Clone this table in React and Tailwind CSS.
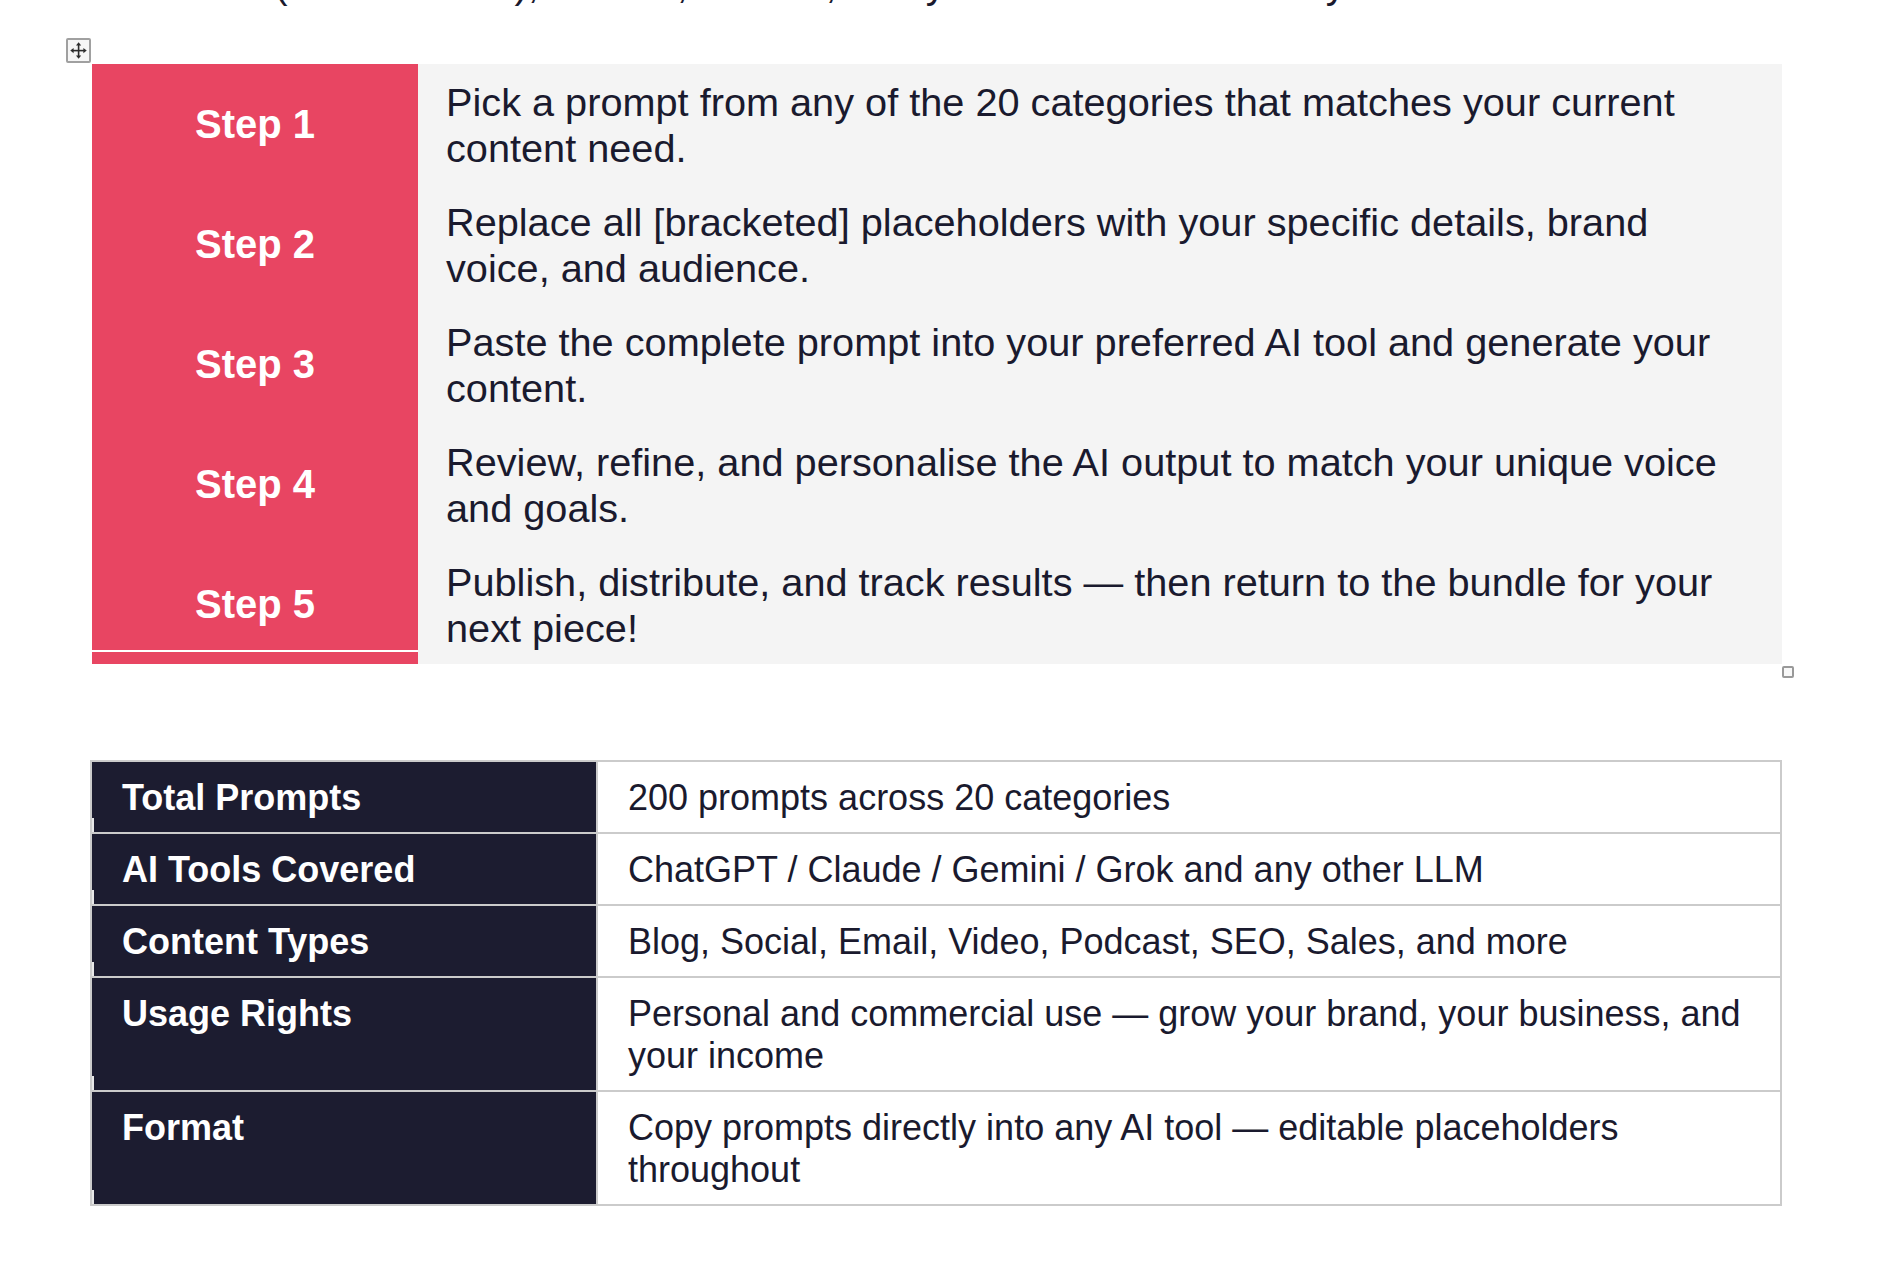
import React from "react";

const steps = [
  { label: "Step 1", text: "Pick a prompt from any of the 20 categories that matches your current content need." },
  { label: "Step 2", text: "Replace all [bracketed] placeholders with your specific details, brand voice, and audience." },
  { label: "Step 3", text: "Paste the complete prompt into your preferred AI tool and generate your content." },
  { label: "Step 4", text: "Review, refine, and personalise the AI output to match your unique voice and goals." },
  { label: "Step 5", text: "Publish, distribute, and track results — then return to the bundle for your next piece!" },
];

const details = [
  { label: "Total Prompts", value: "200 prompts across 20 categories" },
  { label: "AI Tools Covered", value: "ChatGPT / Claude / Gemini / Grok and any other LLM" },
  { label: "Content Types", value: "Blog, Social, Email, Video, Podcast, SEO, Sales, and more" },
  { label: "Usage Rights", value: "Personal and commercial use — grow your brand, your business, and your income" },
  { label: "Format", value: "Copy prompts directly into any AI tool — editable placeholders throughout" },
];

function MoveHandle() {
  return (
    <div className="absolute left-[-26px] top-[-26px] flex h-[25px] w-[25px] items-center justify-center rounded-[2px] border-2 border-[#a0a0a0] bg-[#f6f6f6]">
      <svg width="17" height="17" viewBox="0 0 17 17" fill="#2d2d2d">
        <rect x="7.8" y="3" width="1.6" height="11" />
        <rect x="3" y="7.8" width="11" height="1.6" />
        <polygon points="8.6,0.3 6,3.6 11.2,3.6" />
        <polygon points="8.6,16.7 6,13.4 11.2,13.4" />
        <polygon points="0.3,8.6 3.6,6 3.6,11.2" />
        <polygon points="16.7,8.6 13.4,6 13.4,11.2" />
      </svg>
    </div>
  );
}

export default function App() {
  return (
    <div className="h-[1278px] w-[1890px] overflow-hidden bg-white text-[#1a1a2e]" style={{ fontFamily: '"Liberation Sans", Arial, sans-serif' }}>
      {/* tail of the paragraph above, scrolled mostly out of view */}
      <div className="mt-[-39px] whitespace-nowrap pl-[92px] text-[40px] leading-[46px]">
        Use them (all AI models), Claude, Gemini, many other AI models ready to use.
      </div>

      {/* Steps table */}
      <div className="relative ml-[92px] mt-[57px] w-[1690px]">
        <MoveHandle />
        {steps.map((s, i) => (
          <div key={s.label} className="grid h-[120px] grid-cols-[326px_1fr]">
            <div className="relative flex items-center justify-center bg-[#e84562] text-[40px] font-bold text-white">
              {s.label}
              {i === steps.length - 1 && <span className="absolute bottom-[12px] left-0 h-[2px] w-full bg-white" />}
            </div>
            <div className="flex items-center bg-[#f4f4f4] pl-[28px] pr-[30px] pt-[2px] text-[39.7px] leading-[46px]">
              <p>{s.text}</p>
            </div>
          </div>
        ))}
        <div className="absolute left-[1690px] top-[602px] h-[12px] w-[12px] rounded-[2px] border-2 border-[#999] bg-[#f8f8f8]" />
      </div>

      {/* Details table */}
      <div className="ml-[90px] mt-[96px] w-[1692px] border-2 border-[#cbcbcb]">
        {details.map((d, i) => (
          <div key={d.label} className={`grid grid-cols-[504px_1fr] ${i > 0 ? "border-t-2 border-[#cbcbcb]" : ""}`}>
            <div className="relative bg-[#1c1c30] px-[30px] pb-[13px] pt-[15px] text-[36px] font-bold leading-[42px] text-white">
              {d.label}
              <span className="absolute bottom-0 left-0 h-[14px] w-[2px] bg-[#e8e8e8]" />
            </div>
            <div className="border-l-2 border-[#cbcbcb] px-[30px] pb-[13px] pt-[15px] text-[36px] leading-[42px]">{d.value}</div>
          </div>
        ))}
      </div>
    </div>
  );
}
